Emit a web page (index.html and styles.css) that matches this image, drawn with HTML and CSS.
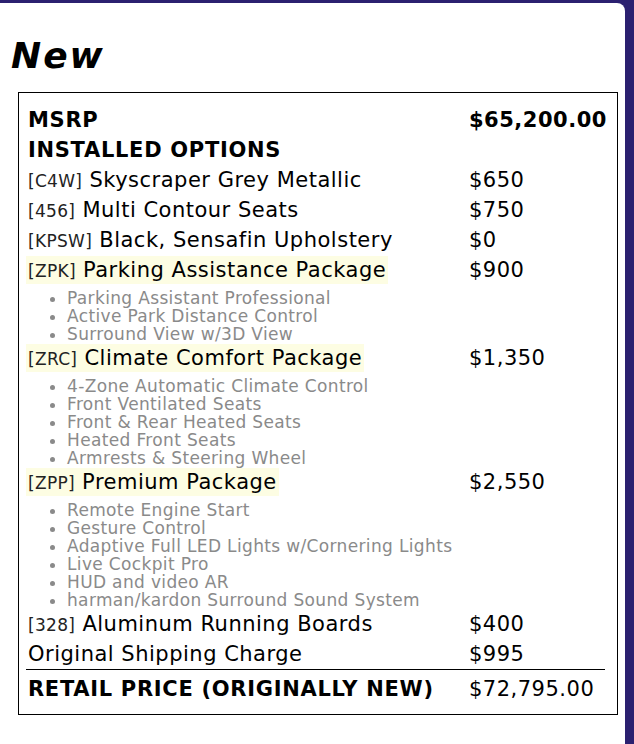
FILE: index.html
```html
<!DOCTYPE html>
<html lang="en">
<head>
<meta charset="utf-8">
<title>New - Pricing</title>
<link rel="stylesheet" href="styles.css">
</head>
<body>
<div class="panel">
  <h1 class="title">New</h1>
  <div class="sticker">
    <div class="row bold"><span class="name">MSRP</span><span class="price">$65,200.00</span></div>
    <div class="row bold"><span class="name">INSTALLED OPTIONS</span><span class="price"></span></div>
    <div class="row"><span class="name"><span class="code">[C4W]</span> Skyscraper Grey Metallic</span><span class="price">$650</span></div>
    <div class="row"><span class="name"><span class="code">[456]</span> Multi Contour Seats</span><span class="price">$750</span></div>
    <div class="row"><span class="name"><span class="code">[KPSW]</span> Black, Sensafin Upholstery</span><span class="price">$0</span></div>
    <div class="row"><span class="name"><span class="pkg"><span class="code">[ZPK]</span> Parking Assistance Package</span></span><span class="price">$900</span></div>
    <ul class="feat">
      <li>Parking Assistant Professional</li>
      <li>Active Park Distance Control</li>
      <li>Surround View w/3D View</li>
    </ul>
    <div class="row"><span class="name"><span class="pkg"><span class="code">[ZRC]</span> Climate Comfort Package</span></span><span class="price">$1,350</span></div>
    <ul class="feat">
      <li>4-Zone Automatic Climate Control</li>
      <li>Front Ventilated Seats</li>
      <li>Front &amp; Rear Heated Seats</li>
      <li>Heated Front Seats</li>
      <li>Armrests &amp; Steering Wheel</li>
    </ul>
    <div class="row"><span class="name"><span class="pkg"><span class="code">[ZPP]</span> Premium Package</span></span><span class="price">$2,550</span></div>
    <ul class="feat">
      <li>Remote Engine Start</li>
      <li>Gesture Control</li>
      <li>Adaptive Full LED Lights w/Cornering Lights</li>
      <li>Live Cockpit Pro</li>
      <li>HUD and video AR</li>
      <li>harman/kardon Surround Sound System</li>
    </ul>
    <div class="row"><span class="name"><span class="code">[328]</span> Aluminum Running Boards</span><span class="price">$400</span></div>
    <div class="row"><span class="name">Original Shipping Charge</span><span class="price">$995</span></div>
    <div class="row total"><span class="name bold">RETAIL PRICE (ORIGINALLY NEW)</span><span class="price">$72,795.00</span></div>
  </div>
</div>
</body>
</html>
```

FILE: styles.css
```css
html, body {
  margin: 0;
  padding: 0;
}

body {
  background: #2b2070;
  font-family: "DejaVu Sans", "Noto Sans", sans-serif;
  color: #000;
  overflow: hidden;
}

.panel {
  background: #fff;
  margin: 3px 9px 0 0;
  border-top-right-radius: 8px;
  padding: 32px 0 0 11px;
  box-sizing: border-box;
  min-height: calc(100vh - 3px);
}

.title {
  margin: 0;
  font: italic bold 36px/42px "DejaVu Sans", sans-serif;
  letter-spacing: 2px;
}

.sticker {
  margin: 15px 0 0 7px;
  border: 1px solid #000;
  padding: 12px 12px 10px 7px;
  box-sizing: border-box;
  width: 600px;
}

.row {
  display: grid;
  grid-template-columns: 441px 137px;
  font-size: 21px;
  line-height: 30px;
  letter-spacing: 0.5px;
  white-space: nowrap;
}

.row > span {
  padding-left: 2px;
}

.bold {
  font-weight: bold;
}

.row.bold > .name,
.name.bold {
  letter-spacing: 0.7px;
}

.code {
  font-size: 17px;
  line-height: 1;
  letter-spacing: 0.3px;
  color: #222;
}

.pkg {
  background: #fdfde3;
  padding: 2px 2px;
  margin-left: -2px;
}

.feat {
  margin: 4px 0 0 2px;
  padding: 0 0 0 39px;
  font-size: 17px;
  line-height: 18px;
  letter-spacing: 0.35px;
  color: #8a8a8a;
}

.total {
  border-top: 1px solid #000;
  padding-top: 4px;
}
```
